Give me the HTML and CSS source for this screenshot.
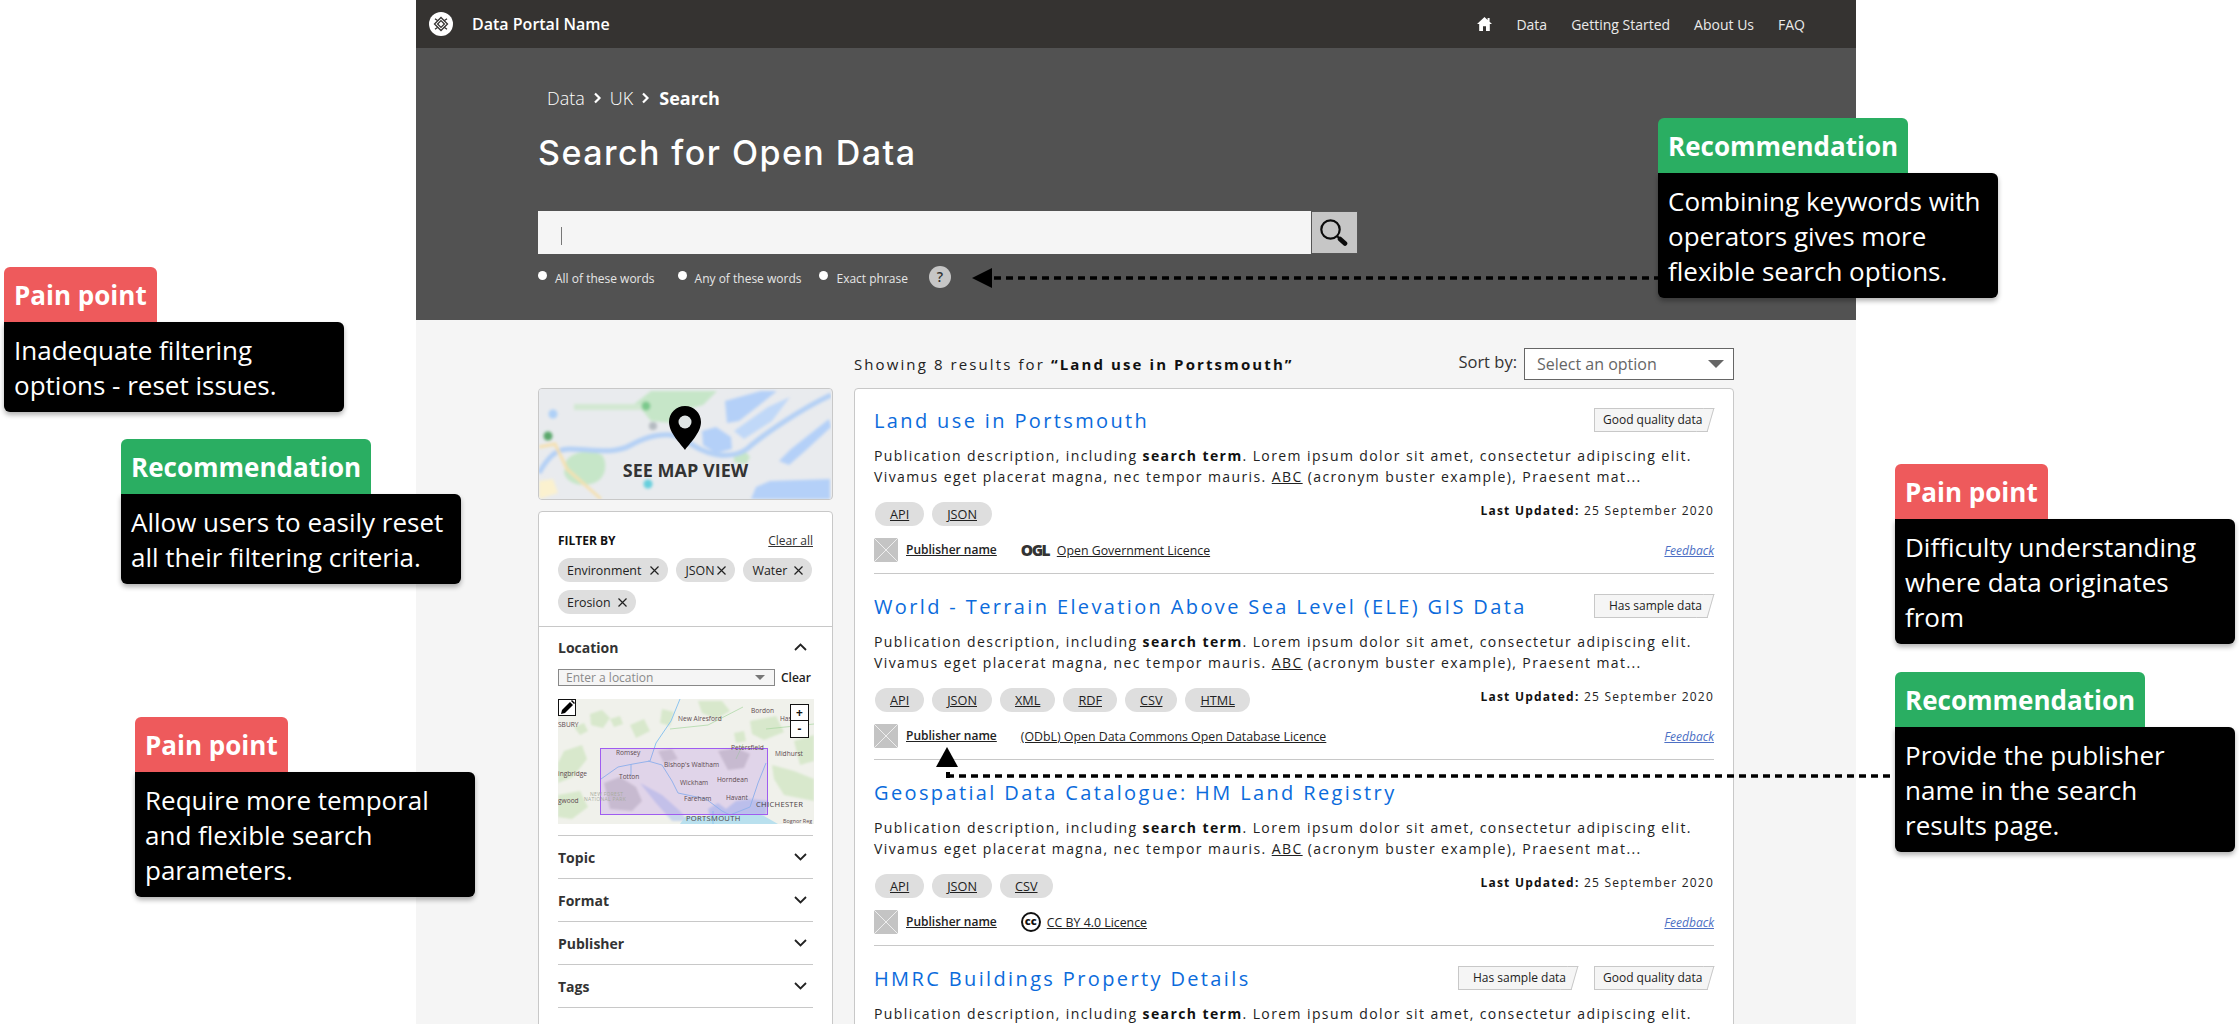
FILE: index.html
```html
<!DOCTYPE html>
<html lang="en">
<head>
<meta charset="utf-8">
<title>Data Portal Search</title>
<link rel="stylesheet" href="styles.css">
</head>
<body>
<div class="page">
  <header class="topbar">
    <div class="brand">
      <span class="brand-logo"><svg width="24" height="24" viewBox="0 0 24 24"><circle cx="12" cy="12" r="12" fill="#fff"/><g fill="none" stroke="#353331" stroke-width="1.3"><path d="M12 5.500 18.500 12 12 18.500 5.500 12Z"/><path d="M12 8.600 15.400 12 12 15.400 8.600 12Z"/><path d="M8.800 8.800 6 6.800M15.200 8.800 18 6.800M8.800 15.200 6 17.200M15.200 15.200 18 17.200"/></g></svg></span>
      <span class="brand-name">Data Portal Name</span>
    </div>
    <nav class="topnav">
      <svg class="home" width="15" height="14" viewBox="0 0 15 14"><path fill="#fff" d="M7.500 0 0 7h2.200v7h3.800V9.200h3V14h3.800V7H15l-2.400-2.200V1h-2v2Z"/></svg>
      <a>Data</a><a>Getting Started</a><a>About Us</a><a>FAQ</a>
    </nav>
  </header>

  <section class="hero">
    <div class="crumbs">
      <span>Data</span>
      <svg width="9" height="12" viewBox="0 0 9 12"><path d="M2 1.500 6.500 6 2 10.500" fill="none" stroke="#fff" stroke-width="2.200"/></svg>
      <span>UK</span>
      <svg width="9" height="12" viewBox="0 0 9 12"><path d="M2 1.500 6.500 6 2 10.500" fill="none" stroke="#fff" stroke-width="2.200"/></svg>
      <strong>Search</strong>
    </div>
    <h1 class="hero-title">Search for Open Data</h1>
    <div class="searchbox">
      <div class="search-input"><span class="caret"></span></div>
      <div class="search-btn"><svg width="28" height="28" viewBox="0 0 28 28"><circle cx="10.500" cy="10.500" r="9.200" fill="none" stroke="#0c0c0c" stroke-width="2.200"/><path d="M17 17 20 20" stroke="#0c0c0c" stroke-width="2"/><path d="M20 20 25 24.500" stroke="#0c0c0c" stroke-width="4.600" stroke-linecap="round"/></svg></div>
    </div>
    <div class="search-opts">
      <span class="radio"></span><span class="opt opt-a">All of these words</span>
      <span class="radio"></span><span class="opt opt-b">Any of these words</span>
      <span class="radio"></span><span class="opt opt-c">Exact phrase</span>
      <span class="help">?</span>
    </div>
  </section>

  <main class="content">
    <aside class="side">
      <div class="mapcard">
        <svg class="mapcard-bg" width="292" height="110" viewBox="0 0 292 110">
          <defs><filter id="soft"><feGaussianBlur stdDeviation="1.800"/></filter></defs>
          <rect width="292" height="110" fill="#e9ebee"/>
          <g filter="url(#soft)">
            <path fill="#c6e6c8" d="M112 2h66l-14 14-22 6-8 12-22-2-8-10-10-6Z"/>
            <path fill="#c6e6c8" d="M27 72c6-10 26-12 36-6 6 8 4 24-8 28-12 4-26 2-30-10Z"/>
            <path fill="#c6e6c8" d="M195 65l11-3 5 6-4 7-12-2Z"/>
            <path fill="#d2e8d2" d="M35 15h70v6H35Z"/>
            <circle cx="107" cy="17" r="4.500" fill="#7cc98c"/>
            <circle cx="9" cy="47" r="4.500" fill="#5aa76a"/>
            <circle cx="14" cy="25" r="4.500" fill="#aed0f7"/>
            <circle cx="114" cy="37" r="4" fill="#b4bac0"/>
            <circle cx="109" cy="95" r="4.500" fill="#66cfdd"/>
            <path fill="none" stroke="#b4d0f5" stroke-width="5" d="M0 84C8 70 16 60 30 60 50 60 75 66 92 56 110 46 130 42 145 50 165 66 190 72 208 60 225 45 262 20 292 6"/>
            <path fill="none" stroke="#f6e0ae" stroke-width="3" d="M0 58 16 55 28 80 62 110"/>
            <path fill="#fbf1cf" d="M0 92l14-2 5 14-19 6Z"/>
            <path fill="#b4d0f8" d="M163 42l14-4 15 10 1 12-16 4-13-8Z"/>
            <path fill="#b4d0f8" d="M186 12l36-10h16l-20 16-18 14-12 2Z"/>
            <path fill="#b4d0f8" d="M212 110l5-12 14-6 60-2v20Z"/>
            <path fill="#b4d0f8" d="M240 72l12-12 38-30 2 8-26 24-16 14Z"/>
            <path fill="#c0d8f8" d="M195 42l34-24 22-10-18 24-28 18Z"/>
          </g>
        </svg>
        <svg class="pin" width="32" height="44" viewBox="0 0 32 44"><path d="M16 0C7 0 0 7 0 16c0 11 12 22 16 28 4-6 16-17 16-28C32 7 25 0 16 0Z"/><circle cx="16" cy="16" r="6.500" fill="#dfe5e5"/></svg>
        <span class="mapcard-label">SEE MAP VIEW</span>
      </div>

      <div class="filters">
        <div class="filter-top">
          <div class="filter-heading"><strong>FILTER BY</strong><a>Clear all</a></div>
          <div class="chips">
            <span class="chip">Environment<svg class="x x-wide" width="9" height="9" viewBox="0 0 9 9"><path d="M.5.5l8 8M8.500.5l-8 8" stroke="#222" stroke-width="1.200"/></svg></span>
            <span class="chip">JSON<svg class="x x-tight" width="9" height="9" viewBox="0 0 9 9"><path d="M.5.5l8 8M8.500.5l-8 8" stroke="#222" stroke-width="1.200"/></svg></span>
            <span class="chip">Water<svg class="x" width="9" height="9" viewBox="0 0 9 9"><path d="M.5.5l8 8M8.500.5l-8 8" stroke="#222" stroke-width="1.200"/></svg></span>
            <span class="chip">Erosion<svg class="x" width="9" height="9" viewBox="0 0 9 9"><path d="M.5.5l8 8M8.500.5l-8 8" stroke="#222" stroke-width="1.200"/></svg></span>
          </div>
        </div>
        <div class="accordion">
          <div class="acc-open">
            <div class="acc-head acc-first"><span>Location</span><svg width="13" height="8" viewBox="0 0 13 8"><path d="M1 7 6.500 1.500 12 7" fill="none" stroke="#222" stroke-width="1.800"/></svg></div>
            <div class="loc-row">
              <div class="loc-select"><span>Enter a location</span><i class="tri-small"></i></div>
              <span class="loc-clear">Clear</span>
            </div>
            <div class="locmap">
              <svg width="256" height="125" viewBox="0 0 256 125">
                <defs><filter id="soft2"><feGaussianBlur stdDeviation="1.100"/></filter></defs>
                <rect width="256" height="125" fill="#f0f1eb"/>
                <g filter="url(#soft2)" fill="#d8e8cc">
                  <path d="M32 15l12-4 8 8-7 10-12-3Z"/><path d="M72 26l14-6 6 12-14 7Z"/><path d="M6 52l18-6 5 14-14 18-15 6V64Z"/><path d="M104 10l12 3-4 14-10-3Z"/>
                  <path d="M140 2h24l8 10-14 8-14-6Z"/><path d="M192 22l26-5 8 16-20 8-12-6Z"/><path d="M236 42l20-6v26l-14 4Z"/><path d="M214 66l22 6 20 8v22l-30-6-10-16Z"/>
                  <path d="M16 28l10-4 4 8-8 4Z"/><path d="M52 20l10-3 3 8-9 3Z"/><path d="M176 34l10-2 2 10-10 2Z"/><path d="M0 96l22-4 8 16-16 12-14-2Z"/>
                  <path fill="#cfcfcb" d="M46 84l16-6 16 10 6 14-10 10-22-2Z"/>
                  <path fill="#cfcfcb" d="M160 52l18-3 14 6-6 14-16 2Z"/>
                  <path fill="#d2d2ce" d="M100 52l14-2 6 10-14 4Z"/>
                  <path fill="#c9d6ec" d="M82 84 104 96 122 112 130 122 114 122 98 104Z"/>
                  <path fill="#bfd4ee" d="M150 110l10-6 8 6 10-8 14-2 18 2-2 14-56 2Z"/>
                </g>
                <path fill="#b9e0ee" d="M122 125l6-8 20 1 20-3 28-1 10 3 14 8Z"/>
                <g fill="none" stroke="#8cc4ef" stroke-width="1">
                  <path d="M122 0 113 22 98 44 92 62 75 65 60 68 43 80"/>
                  <path d="M73 65v12M90 62l14 4 10 16 6 12 28 6 16 12 8 4 20-8 8-24 8-20"/>
                  <path d="M155 112v13"/>
                </g>
                <g fill="none" stroke="#a6d69f" stroke-width=".7"><path d="M112 30 150 26 185 8"/><path d="M185 45 178 60"/><path d="M208 30 256 25"/></g>
                <rect class="bbox" x="42.500" y="49.500" width="167" height="66"/>
                <g class="maplabels">
                  <text x="0" y="28">SBURY</text><text x="120" y="21.500">New Alresford</text><text x="193" y="13.500">Bordon</text><text x="222" y="21.500">Has</text>
                  <text x="173" y="50.500">Petersfield</text><text x="217" y="56.500">Midhurst</text><text x="58" y="55.500">Romsey</text><text x="106" y="67.500">Bishop's Waltham</text>
                  <text x="0" y="76.500">ingbridge</text><text x="61" y="79.500">Totton</text><text x="159" y="82.500">Horndean</text><text x="122" y="85.500">Wickham</text>
                  <text x="126" y="101.500">Fareham</text><text x="168" y="100.500">Havant</text><text x="0" y="103.500">gwood</text><text class="tiny" x="225" y="124">Bognor Reg</text>
                  <text class="big" x="198" y="107.500">CHICHESTER</text><text class="big" x="128" y="121.500">PORTSMOUTH</text>
                  <text class="park" x="32" y="97">NEW FOREST</text><text class="park" x="26" y="102">NATIONAL PARK</text>
                </g>
              </svg>
              <span class="pencil"><svg width="15" height="15" viewBox="0 0 15 15"><path d="M1 14l1-4 8-8 3 3-8 8Z"/><path d="M11 1l1-1 3 3-1 1Z"/></svg></span>
              <span class="zoomer"><b>+</b><b>-</b></span>
            </div>
          </div>
          <div class="acc-head acc-row"><span>Topic</span><svg width="13" height="8" viewBox="0 0 13 8"><path d="M1 1 6.500 6.500 12 1" fill="none" stroke="#222" stroke-width="1.800"/></svg></div>
          <div class="acc-head acc-row"><span>Format</span><svg width="13" height="8" viewBox="0 0 13 8"><path d="M1 1 6.500 6.500 12 1" fill="none" stroke="#222" stroke-width="1.800"/></svg></div>
          <div class="acc-head acc-row"><span>Publisher</span><svg width="13" height="8" viewBox="0 0 13 8"><path d="M1 1 6.500 6.500 12 1" fill="none" stroke="#222" stroke-width="1.800"/></svg></div>
          <div class="acc-head acc-row"><span>Tags</span><svg width="13" height="8" viewBox="0 0 13 8"><path d="M1 1 6.500 6.500 12 1" fill="none" stroke="#222" stroke-width="1.800"/></svg></div>
        </div>
      </div>
    </aside>

    <section class="results">
      <div class="results-head">
        <p class="count">Showing 8 results for <strong>“Land use in Portsmouth”</strong></p>
        <div class="sort"><span class="sort-label">Sort by:</span><div class="sort-select"><span>Select an option</span><i class="tri"></i></div></div>
      </div>
      <div class="result-list">
        <article class="result">
          <div class="r-head"><h2>Land use in Portsmouth</h2><div class="badges"><span class="badge">Good quality data</span></div></div>
          <p class="desc">Publication description, including <b>search term</b>. Lorem ipsum dolor sit amet, consectetur adipiscing elit.<br>Vivamus eget placerat magna, nec tempor mauris. <u>ABC</u> (acronym buster example), Praesent mat...</p>
          <div class="r-tags"><div class="tags"><a>API</a><a>JSON</a></div><p class="updated"><b>Last Updated:</b> 25 September 2020</p></div>
          <div class="r-meta">
            <span class="thumb"><svg width="24" height="24" viewBox="0 0 24 24"><rect width="24" height="24" fill="#c4c4c4"/><path d="M0 0l24 24M24 0 0 24" stroke="#eee"/></svg></span>
            <a class="publisher">Publisher name</a>
            <span class="ogl">OGL</span><a class="licence">Open Government Licence</a>
            <a class="feedback">Feedback</a>
          </div>
        </article>
        <article class="result">
          <div class="r-head"><h2>World - Terrain Elevation Above Sea Level (ELE) GIS Data</h2><div class="badges"><span class="badge badge-wide">Has sample data</span></div></div>
          <p class="desc">Publication description, including <b>search term</b>. Lorem ipsum dolor sit amet, consectetur adipiscing elit.<br>Vivamus eget placerat magna, nec tempor mauris. <u>ABC</u> (acronym buster example), Praesent mat...</p>
          <div class="r-tags"><div class="tags"><a>API</a><a>JSON</a><a>XML</a><a>RDF</a><a>CSV</a><a>HTML</a></div><p class="updated"><b>Last Updated:</b> 25 September 2020</p></div>
          <div class="r-meta">
            <span class="thumb"><svg width="24" height="24" viewBox="0 0 24 24"><rect width="24" height="24" fill="#c4c4c4"/><path d="M0 0l24 24M24 0 0 24" stroke="#eee"/></svg></span>
            <a class="publisher">Publisher name</a>
            <a class="licence licence-plain">(ODbL) Open Data Commons Open Database Licence</a>
            <a class="feedback">Feedback</a>
          </div>
        </article>
        <article class="result">
          <div class="r-head"><h2>Geospatial Data Catalogue: HM Land Registry</h2></div>
          <p class="desc">Publication description, including <b>search term</b>. Lorem ipsum dolor sit amet, consectetur adipiscing elit.<br>Vivamus eget placerat magna, nec tempor mauris. <u>ABC</u> (acronym buster example), Praesent mat...</p>
          <div class="r-tags"><div class="tags"><a>API</a><a>JSON</a><a>CSV</a></div><p class="updated"><b>Last Updated:</b> 25 September 2020</p></div>
          <div class="r-meta">
            <span class="thumb"><svg width="24" height="24" viewBox="0 0 24 24"><rect width="24" height="24" fill="#c4c4c4"/><path d="M0 0l24 24M24 0 0 24" stroke="#eee"/></svg></span>
            <a class="publisher">Publisher name</a>
            <span class="cc">cc</span><a class="licence licence-cc">CC BY 4.0 Licence</a>
            <a class="feedback">Feedback</a>
          </div>
        </article>
        <article class="result">
          <div class="r-head"><h2>HMRC Buildings Property Details</h2><div class="badges"><span class="badge badge-wide">Has sample data</span><span class="badge">Good quality data</span></div></div>
          <p class="desc">Publication description, including <b>search term</b>. Lorem ipsum dolor sit amet, consectetur adipiscing elit.</p>
        </article>
      </div>
    </section>
  </main>
</div>

<svg class="connectors" width="2239" height="1024" viewBox="0 0 2239 1024">
  <path class="dash" d="M994 278H1658"/>
  <path d="M972 278 992 268V288Z"/>
  <path class="dash" d="M947 776H1895"/>
  <path d="M946 772h4v6h-4Z"/>
  <path d="M947 747 936 767H958Z"/>
</svg>

<div class="note note-rec-top"><div class="note-head rec">Recommendation</div><div class="note-body">Combining keywords with<br>operators gives more<br>flexible search options.</div></div>
<div class="note note-pain-a"><div class="note-head pain">Pain point</div><div class="note-body">Inadequate filtering<br>options - reset issues.</div></div>
<div class="note note-rec-left"><div class="note-head rec">Recommendation</div><div class="note-body">Allow users to easily reset<br>all their filtering criteria.</div></div>
<div class="note note-pain-b"><div class="note-head pain">Pain point</div><div class="note-body">Require more temporal<br>and flexible search<br>parameters.</div></div>
<div class="note note-pain-c"><div class="note-head pain">Pain point</div><div class="note-body">Difficulty understanding<br>where data originates<br>from</div></div>
<div class="note note-rec-right"><div class="note-head rec">Recommendation</div><div class="note-body">Provide the publisher<br>name in the search<br>results page.</div></div>
</body>
</html>
```
FILE: styles.css
```css
* { box-sizing: border-box; }
html, body { margin: 0; height: 1024px; overflow: hidden; background: #fff; }
body { position: relative; font-family: "Open Sans", sans-serif; color: #222; }
a { color: inherit; }
p, h1, h2 { margin: 0; }

.page { width: 1440px; height: 1024px; margin-left: 416px; background: #f5f5f5; overflow: hidden; }

.topbar { height: 48px; background: #353331; display: flex; align-items: center; justify-content: space-between; padding: 0 51px 0 13px; color: #fff; }
.brand { display: flex; align-items: center; gap: 19px; }
.brand-logo { display: flex; }
.brand-name { font-size: 16px; font-weight: 600; }
.topnav { display: flex; align-items: center; gap: 24px; font-size: 14px; color: #eaeaea; }
.home { margin-right: 0; }

.hero { height: 272px; background: #525252; padding: 38px 0 0 122px; color: #fff; }
.crumbs { display: flex; align-items: center; gap: 8px; height: 24px; padding-left: 9px; font-size: 18px; font-weight: 300; }
.crumbs strong { font-weight: 700; font-size: 18px; margin-left: 1px; }
.hero-title { margin-top: 19px; height: 48px; line-height: 48px; font-family: Inter, "Open Sans", sans-serif; font-size: 34px; font-weight: 500; letter-spacing: 1.450px; }
.searchbox { margin-top: 34px; display: flex; height: 43px; width: 820px; }
.search-input { width: 774px; background: #f5f5f5; padding: 16px 0 0 23px; border-right: 1px solid #555; }
.caret { display: block; width: 1px; height: 18px; background: #777; }
.search-btn { width: 46px; background: #c6c6c6; border: 1px solid #555; border-left: 0; display: flex; align-items: center; justify-content: center; padding: 0 1px 0 0; }
.search-opts { margin-top: 12px; height: 22px; display: flex; align-items: center; font-size: 12px; color: #e6e6e6; }
.radio { width: 9px; height: 9px; border-radius: 50%; background: #fff; margin-top: -3px; }
.opt { margin-left: 8px; margin-top: 3px; line-height: 16px; font-weight: 400; }
.opt-a { margin-right: 23px; }
.opt-b { margin-right: 18px; }
.opt-c { margin-right: 21px; }
.help { width: 22px; height: 22px; border-radius: 50%; background: #c6c6c6; color: #333; text-align: center; line-height: 22px; font-size: 14px; font-weight: 600; }

.content { display: flex; gap: 21px; padding: 0 122px; }
.side { width: 295px; flex: none; padding-top: 68px; }
.mapcard { position: relative; height: 112px; border: 1px solid #c8c8c8; border-radius: 4px; overflow: hidden; background: #e9ebee; }
.mapcard-bg { display: block; }
.pin { position: absolute; left: 130px; top: 17px; }
.mapcard-label { position: absolute; left: 0; right: 0; top: 67px; text-align: center; font-size: 18px; line-height: 28px; font-weight: 700; color: #333; }

.filters { margin-top: 11px; height: 520px; background: #fff; border: 1px solid #c8c8c8; border-radius: 4px; }
.filter-top { padding: 18px 19px 12px; border-bottom: 1px solid #c8c8c8; height: 115px; }
.filter-heading { display: flex; justify-content: space-between; align-items: center; height: 20px; font-size: 12px; }
.filter-heading strong { font-weight: 700; color: #111; }
.filter-heading a { text-decoration: underline; color: #333; }
.chips { margin-top: 8px; display: flex; flex-wrap: wrap; gap: 8px; }
.chip { height: 24px; display: inline-flex; align-items: center; padding: 0 9px; border-radius: 12px; background: #dedede; font-size: 12.400px; font-weight: 500; color: #222; }
.x { margin-left: 7px; }
.x-wide { margin-left: 9px; }
.x-tight { margin-left: 3px; }

.accordion { padding: 0 19px; }
.acc-head { display: flex; justify-content: space-between; align-items: center; padding-right: 6px; font-size: 14px; font-weight: 700; color: #333; height: 42px; }
.acc-first { padding-bottom: 2px; }
.acc-row { height: 43px; border-bottom: 1px solid #c8c8c8; }
.acc-open { height: 209px; border-bottom: 1px solid #c8c8c8; }
.loc-row { display: flex; align-items: center; height: 17px; gap: 6px; }
.loc-select { width: 217px; height: 17px; border: 1px solid #888; background: #f5f5f5; display: flex; align-items: center; justify-content: space-between; padding: 0 9px 0 7px; font-size: 12px; color: #8a8a8a; }
.tri-small { width: 0; height: 0; border-left: 5px solid transparent; border-right: 5px solid transparent; border-top: 5px solid #777; }
.loc-clear { font-size: 12px; font-weight: 600; color: #222; }
.locmap { position: relative; margin-top: 13px; width: 256px; height: 125px; }
.locmap svg { display: block; }
.bbox { fill: rgba(175, 120, 225, .24); stroke: #9f5cf0; stroke-width: 1; }
.maplabels text { font-family: "Open Sans", sans-serif; font-size: 6.600px; fill: #5d4a4f; }
.maplabels .big { font-size: 7.600px; fill: #4a3f44; letter-spacing: .3px; }
.maplabels .park { font-size: 5px; fill: #a7aca0; letter-spacing: .3px; }
.maplabels .tiny { font-size: 5.400px; }
.pencil { position: absolute; left: 0; top: 0; width: 18px; height: 17px; background: #fff; border: 1px solid #111; display: flex; align-items: center; justify-content: center; }
.zoomer { position: absolute; left: 232px; top: 5px; width: 19px; display: flex; flex-direction: column; border: 1px solid #111; background: #fff; }
.zoomer b { height: 16px; line-height: 15px; text-align: center; font-size: 12px; font-weight: 700; color: #111; }
.zoomer b:first-child { border-bottom: 1px solid #111; }

.results { width: 880px; flex: none; }
.results-head { height: 68px; padding-top: 28px; display: flex; justify-content: space-between; }
.count { line-height: 32px; height: 32px; font-size: 15px; letter-spacing: 2.100px; color: #222; }
.count strong { font-weight: 700; color: #111; }
.sort { display: flex; align-items: flex-start; gap: 7px; }
.sort-label { font-size: 16.500px; line-height: 27px; font-weight: 500; color: #333; }
.sort-select { width: 210px; height: 32px; border: 1px solid #666; background: #fff; display: flex; align-items: center; justify-content: space-between; padding: 0 9px 0 12px; font-size: 16px; color: #666; }
.tri { width: 0; height: 0; border-left: 8px solid transparent; border-right: 8px solid transparent; border-top: 8px solid #666; }

.result-list { background: #fff; border: 1px solid #c8c8c8; border-radius: 4px; padding: 0 19px; min-height: 640px; }
.result { height: 186px; padding-top: 20px; border-bottom: 1px solid #c8c8c8; }
.result:first-child { height: 185px; padding-top: 19px; }
.r-head { display: flex; justify-content: space-between; align-items: flex-start; height: 24px; }
.r-head h2 { font-size: 20px; line-height: 26px; font-weight: 500; letter-spacing: 2.370px; color: #0b6bdc; white-space: nowrap; }
.badges { display: flex; gap: 16px; }
.badge { display: block; position: relative; z-index: 0; width: 120px; height: 24px; line-height: 23px; padding-left: 9px; font-size: 12px; color: #222; white-space: nowrap; }
.badge::before { content: ""; position: absolute; z-index: -1; left: 0; top: 0; bottom: 0; right: 8px; background: #f5f5f5; border: 1px solid #c8c8c8; border-right: 0; }
.badge::after { content: ""; position: absolute; z-index: -1; top: 0; bottom: 0; right: 3px; width: 10px; background: #f5f5f5; border: 1px solid #c8c8c8; border-left: 0; transform: skewX(-16deg); }
.badge-wide { padding-left: 15px; }
.desc { margin-top: 13px; font-size: 14px; line-height: 21px; letter-spacing: 1.400px; color: #222; white-space: nowrap; }
.desc b { font-weight: 700; color: #111; }
.r-tags { margin-top: 15px; height: 24px; display: flex; justify-content: space-between; align-items: flex-start; }
.tags { display: flex; gap: 8px; padding-left: 1px; }
.tags a { height: 24px; line-height: 24px; padding: 0 15px; border-radius: 12px; background: #dedede; font-size: 12.700px; font-weight: 500; text-decoration: underline; color: #222; }
.updated { font-size: 12px; line-height: 18px; letter-spacing: 1.230px; color: #222; }
.updated b { font-weight: 700; color: #111; }
.r-meta { margin-top: 12px; height: 24px; display: flex; align-items: center; font-size: 12.350px; font-weight: 500; }
.thumb { display: flex; width: 24px; height: 24px; }
.publisher { margin-left: 8px; margin-top: -2px; font-size: 12px; font-weight: 600; text-decoration: underline; color: #222; }
.licence { margin-left: 6px; text-decoration: underline; color: #222; }
.licence-plain { margin-left: 24px; }
.licence-cc { margin-left: 6px; }
.ogl { margin-left: 24px; font-size: 15.500px; font-weight: 800; letter-spacing: -1.500px; color: #333; width: 30px; }
.cc { margin-left: 24px; width: 20px; height: 20px; border: 2px solid #111; border-radius: 50%; font-size: 11px; font-weight: 800; line-height: 14px; text-align: center; color: #111; }
.feedback { margin-left: auto; font-size: 12px; font-style: italic; font-weight: 400; text-decoration: underline; color: #4d6fc4; }

.connectors { position: absolute; left: 0; top: 0; pointer-events: none; }
.dash { fill: none; stroke: #000; stroke-width: 3.500; stroke-dasharray: 7 5; }

.note { position: absolute; }
.note-head { display: inline-block; vertical-align: top; height: 55px; line-height: 57px; padding: 0 10px; border-radius: 6px 6px 0 0; font-size: 26px; font-weight: 700; color: #fff; }
.rec { background: #2aae62; }
.pain { background: #ee5a5c; }
.note-body { background: #000; color: #fff; font-size: 26px; line-height: 35px; padding: 11px 10px 9px; border-radius: 0 6px 6px 6px; box-shadow: 0 3px 5px rgba(0, 0, 0, .3); white-space: nowrap; }
.note-rec-top { left: 1658px; top: 118px; width: 340px; }
.note-pain-a { left: 4px; top: 267px; width: 340px; }
.note-rec-left { left: 121px; top: 439px; width: 340px; }
.note-pain-b { left: 135px; top: 717px; width: 340px; }
.note-pain-c { left: 1895px; top: 464px; width: 340px; }
.note-rec-right { left: 1895px; top: 672px; width: 340px; }
```
